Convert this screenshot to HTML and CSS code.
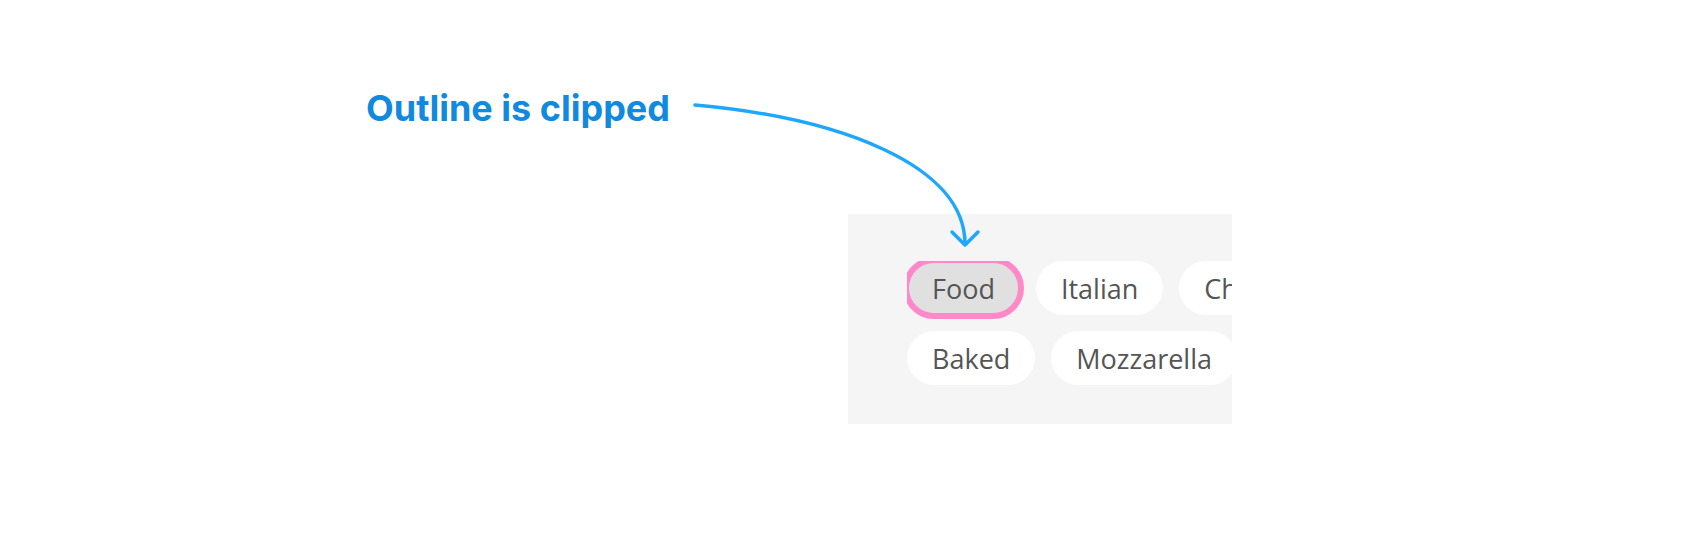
FILE: index.html
```html
<!DOCTYPE html>
<html lang="en">
<head>
<meta charset="utf-8">
<title>Outline is clipped</title>
<link rel="stylesheet" href="styles.css">
</head>
<body>
<div class="stage">
  <p class="note">Outline is clipped</p>
  <div class="panel">
    <ul class="chips">
      <li class="chip chip-focused">Food</li>
      <li class="chip">Italian</li>
      <li class="chip">Cheese</li>
      <li class="chip">Baked</li>
      <li class="chip">Mozzarella</li>
    </ul>
  </div>
  <svg class="arrow" width="1708" height="544" viewBox="0 0 1708 544" aria-hidden="true">
    <path d="M695 105 C840 118 965 165 965 244" fill="none" stroke="#1ea7fd" stroke-width="3.5" stroke-linecap="round"/>
    <path d="M952 232 L965 245 L978 232" fill="none" stroke="#1ea7fd" stroke-width="3.5" stroke-linecap="round" stroke-linejoin="round"/>
  </svg>
</div>
</body>
</html>
```
FILE: styles.css
```css
html, body {
  margin: 0;
  padding: 0;
  background: #ffffff;
}

.stage {
  position: relative;
  width: 1708px;
  height: 544px;
  box-sizing: border-box;
  padding: 86px 0 0 366px;
  overflow: hidden;
}

.note {
  margin: 0;
  font-family: Inter, "Liberation Sans", sans-serif;
  font-weight: 700;
  font-size: 36px;
  line-height: 44px;
  color: #1189de;
}

.panel {
  margin: 84px 0 0 482px;
  width: 384px;
  height: 210px;
  box-sizing: border-box;
  padding: 47px 0 0 59px;
  background: #f5f5f5;
  overflow: hidden;
}

.chips {
  list-style: none;
  margin: 0;
  padding: 0;
  width: 440px;
  display: flex;
  flex-wrap: wrap;
  gap: 16px;
  overflow: hidden;
}

.chip {
  height: 54px;
  box-sizing: border-box;
  padding: 0 25px;
  display: flex;
  align-items: center;
  border-radius: 27px;
  background: #ffffff;
  font-family: "Open Sans", "Noto Sans", sans-serif;
  font-size: 27px;
  color: #555555;
  white-space: nowrap;
}

.chip-focused {
  background: #e0e0e0;
  outline: 6px solid #ff88c8;
  outline-offset: -2px;
}

.arrow {
  position: absolute;
  left: 0;
  top: 0;
  pointer-events: none;
}
```
